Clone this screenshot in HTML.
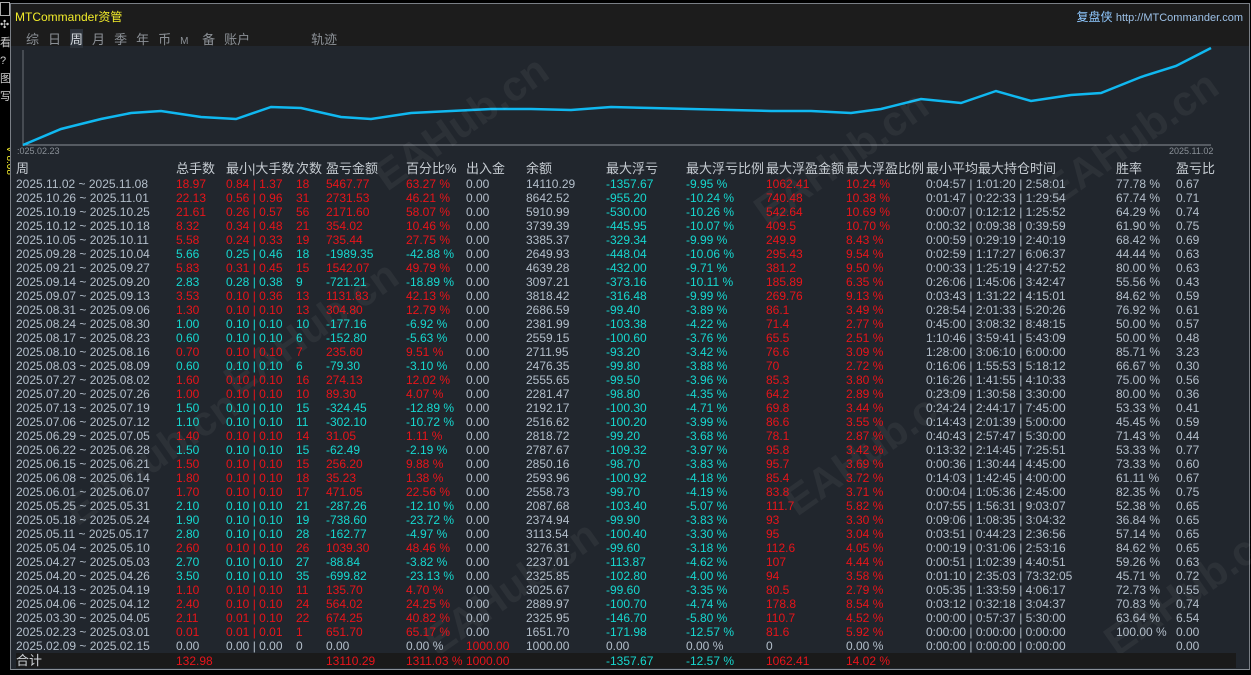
<!DOCTYPE html>
<html><head><meta charset="utf-8"><style>
body{margin:0;width:1251px;height:675px;background:#000;overflow:hidden;position:relative;font-family:"Liberation Sans","Noto Sans CJK SC",sans-serif}
.panel{position:absolute;left:10px;top:3px;width:1238px;height:665px;background:#21262d;border:1px solid #7a7f86;border-bottom:1px solid #8a9097}
.hdr{position:absolute;left:0;top:0;width:1238px;height:42px;background:#1c1c1c}
.title{position:absolute;left:4px;top:4px;color:#f2ec2a;font-size:12px}
.site{position:absolute;right:6px;top:4px;color:#8fc8ff;font-size:12px}
.site span{color:#9cc0e6;font-size:11px}
.tabs{position:absolute;left:15px;top:25px;color:#8b9096;font-size:13px;word-spacing:0}
.tabs b{font-weight:normal;display:inline-block;margin-right:9px}
.tabs .on{color:#d6dbe0;background:#2c323a}
.wm{position:absolute;color:rgba(255,255,255,0.05);font-size:42px;font-weight:bold;transform:rotate(-35deg);white-space:nowrap}
table{position:absolute;left:5px;top:156px;border-collapse:collapse;table-layout:fixed;font-size:12px;color:#b4bfcb}
td{padding:0;height:14px;line-height:14px;white-space:nowrap;overflow:visible}
tr.h td{font-size:13px;height:17px;color:#c6ccd2}
.r td.c{color:#e8141a}.g td.c{color:#16d8d0}
td.cy{color:#16d8d0}td.rd{color:#e8141a}
tr.t td{background:#1a1a1a;height:15px}
</style></head><body>
<div style="position:absolute;left:0;top:0;width:10px;height:675px;background:#000;color:#ccc;font-size:11px;line-height:18px">
<div style="margin-top:2px;border:1px solid #aaa;height:12px;width:8px"></div>
<div>✣</div><div>看</div><div>?</div><div>图</div><div>写</div>
<div style="color:#f2ec2a;writing-mode:vertical-rl;font-size:10px;margin-top:40px">V 8.08</div>
</div>
<div class="panel">
<div class="hdr"><div class="title">MTCommander资管</div><div class="site">复盘侠 <span>http://MTCommander.com</span></div>
<div class="tabs"><b>综</b><b>日</b><b class="on">周</b><b>月</b><b>季</b><b>年</b><b>币</b><b style="font-size:10px;width:13px">M</b><b>备</b><b>账户</b><b style="margin-left:52px">轨迹</b></div></div>
<svg style="position:absolute;left:0;top:42px" width="1238" height="110">
<line x1="12" y1="4" x2="12" y2="100" stroke="#6a7078"/>
<line x1="12" y1="99" x2="1200" y2="99" stroke="#8a9097"/>
<polyline fill="none" stroke="#10b8f0" stroke-width="2.5" points="12,99 50,83 90,73 120,67 150,65 190,71 225,73 260,61 290,62 330,71 360,73 400,67 440,65 480,63 520,63 560,64 600,61 640,62 680,63 720,64 760,65 800,65 840,67 870,63 910,53 950,57 985,45 1020,55 1060,49 1090,47 1130,31 1165,20 1200,2"/>
<text x="6" y="108" fill="#8a9097" font-size="9" font-family="Liberation Sans">:025.02.23</text>
<text x="1158" y="108" fill="#8a9097" font-size="9" font-family="Liberation Sans">2025.11.02</text>
</svg>
<div class="wm" style="left:350px;top:95px">EAHub.cn</div>
<div class="wm" style="left:730px;top:130px">EAHub.cn</div>
<div class="wm" style="left:1020px;top:110px">EAHub.cn</div>
<div class="wm" style="left:40px;top:430px">EAHub.cn</div>
<div class="wm" style="left:400px;top:560px">EAHub.cn</div>
<div class="wm" style="left:760px;top:420px">EAHub.cn</div>
<div class="wm" style="left:1080px;top:560px">EAHub.cn</div>
<div class="wm" style="left:200px;top:300px">EAHub.cn</div>
<table>
<colgroup><col style="width:160px"><col style="width:50px"><col style="width:70px"><col style="width:30px"><col style="width:80px"><col style="width:60px"><col style="width:60px"><col style="width:80px"><col style="width:80px"><col style="width:80px"><col style="width:80px"><col style="width:80px"><col style="width:190px"><col style="width:60px"><col style="width:60px"></colgroup>
<tr class="h"><td>周</td><td>总手数</td><td>最小|大手数</td><td>次数</td><td>盈亏金额</td><td>百分比%</td><td>出入金</td><td>余额</td><td>最大浮亏</td><td>最大浮亏比例</td><td>最大浮盈金额</td><td>最大浮盈比例</td><td>最小平均最大持仓时间</td><td>胜率</td><td>盈亏比</td></tr>
<tr class="r"><td>2025.11.02 ~ 2025.11.08</td><td class="c">18.97</td><td class="c">0.84 | 1.37</td><td class="c">18</td><td class="c">5467.77</td><td class="c">63.27 %</td><td>0.00</td><td>14110.29</td><td class="cy">-1357.67</td><td class="cy">-9.95 %</td><td class="rd">1062.41</td><td class="rd">10.24 %</td><td>0:04:57 | 1:01:20 | 2:58:01</td><td>77.78 %</td><td>0.67</td></tr>
<tr class="r"><td>2025.10.26 ~ 2025.11.01</td><td class="c">22.13</td><td class="c">0.56 | 0.96</td><td class="c">31</td><td class="c">2731.53</td><td class="c">46.21 %</td><td>0.00</td><td>8642.52</td><td class="cy">-955.20</td><td class="cy">-10.24 %</td><td class="rd">740.48</td><td class="rd">10.38 %</td><td>0:01:47 | 0:22:33 | 1:29:54</td><td>67.74 %</td><td>0.71</td></tr>
<tr class="r"><td>2025.10.19 ~ 2025.10.25</td><td class="c">21.61</td><td class="c">0.26 | 0.57</td><td class="c">56</td><td class="c">2171.60</td><td class="c">58.07 %</td><td>0.00</td><td>5910.99</td><td class="cy">-530.00</td><td class="cy">-10.26 %</td><td class="rd">542.64</td><td class="rd">10.69 %</td><td>0:00:07 | 0:12:12 | 1:25:52</td><td>64.29 %</td><td>0.74</td></tr>
<tr class="r"><td>2025.10.12 ~ 2025.10.18</td><td class="c">8.32</td><td class="c">0.34 | 0.48</td><td class="c">21</td><td class="c">354.02</td><td class="c">10.46 %</td><td>0.00</td><td>3739.39</td><td class="cy">-445.95</td><td class="cy">-10.07 %</td><td class="rd">409.5</td><td class="rd">10.70 %</td><td>0:00:32 | 0:09:38 | 0:39:59</td><td>61.90 %</td><td>0.75</td></tr>
<tr class="r"><td>2025.10.05 ~ 2025.10.11</td><td class="c">5.58</td><td class="c">0.24 | 0.33</td><td class="c">19</td><td class="c">735.44</td><td class="c">27.75 %</td><td>0.00</td><td>3385.37</td><td class="cy">-329.34</td><td class="cy">-9.99 %</td><td class="rd">249.9</td><td class="rd">8.43 %</td><td>0:00:59 | 0:29:19 | 2:40:19</td><td>68.42 %</td><td>0.69</td></tr>
<tr class="g"><td>2025.09.28 ~ 2025.10.04</td><td class="c">5.66</td><td class="c">0.25 | 0.46</td><td class="c">18</td><td class="c">-1989.35</td><td class="c">-42.88 %</td><td>0.00</td><td>2649.93</td><td class="cy">-448.04</td><td class="cy">-10.06 %</td><td class="rd">295.43</td><td class="rd">9.54 %</td><td>0:02:59 | 1:17:27 | 6:06:37</td><td>44.44 %</td><td>0.63</td></tr>
<tr class="r"><td>2025.09.21 ~ 2025.09.27</td><td class="c">5.83</td><td class="c">0.31 | 0.45</td><td class="c">15</td><td class="c">1542.07</td><td class="c">49.79 %</td><td>0.00</td><td>4639.28</td><td class="cy">-432.00</td><td class="cy">-9.71 %</td><td class="rd">381.2</td><td class="rd">9.50 %</td><td>0:00:33 | 1:25:19 | 4:27:52</td><td>80.00 %</td><td>0.63</td></tr>
<tr class="g"><td>2025.09.14 ~ 2025.09.20</td><td class="c">2.83</td><td class="c">0.28 | 0.38</td><td class="c">9</td><td class="c">-721.21</td><td class="c">-18.89 %</td><td>0.00</td><td>3097.21</td><td class="cy">-373.16</td><td class="cy">-10.11 %</td><td class="rd">185.89</td><td class="rd">6.35 %</td><td>0:26:06 | 1:45:06 | 3:42:47</td><td>55.56 %</td><td>0.43</td></tr>
<tr class="r"><td>2025.09.07 ~ 2025.09.13</td><td class="c">3.53</td><td class="c">0.10 | 0.36</td><td class="c">13</td><td class="c">1131.83</td><td class="c">42.13 %</td><td>0.00</td><td>3818.42</td><td class="cy">-316.48</td><td class="cy">-9.99 %</td><td class="rd">269.76</td><td class="rd">9.13 %</td><td>0:03:43 | 1:31:22 | 4:15:01</td><td>84.62 %</td><td>0.59</td></tr>
<tr class="r"><td>2025.08.31 ~ 2025.09.06</td><td class="c">1.30</td><td class="c">0.10 | 0.10</td><td class="c">13</td><td class="c">304.80</td><td class="c">12.79 %</td><td>0.00</td><td>2686.59</td><td class="cy">-99.40</td><td class="cy">-3.89 %</td><td class="rd">86.1</td><td class="rd">3.49 %</td><td>0:28:54 | 2:01:33 | 5:20:26</td><td>76.92 %</td><td>0.61</td></tr>
<tr class="g"><td>2025.08.24 ~ 2025.08.30</td><td class="c">1.00</td><td class="c">0.10 | 0.10</td><td class="c">10</td><td class="c">-177.16</td><td class="c">-6.92 %</td><td>0.00</td><td>2381.99</td><td class="cy">-103.38</td><td class="cy">-4.22 %</td><td class="rd">71.4</td><td class="rd">2.77 %</td><td>0:45:00 | 3:08:32 | 8:48:15</td><td>50.00 %</td><td>0.57</td></tr>
<tr class="g"><td>2025.08.17 ~ 2025.08.23</td><td class="c">0.60</td><td class="c">0.10 | 0.10</td><td class="c">6</td><td class="c">-152.80</td><td class="c">-5.63 %</td><td>0.00</td><td>2559.15</td><td class="cy">-100.60</td><td class="cy">-3.76 %</td><td class="rd">65.5</td><td class="rd">2.51 %</td><td>1:10:46 | 3:59:41 | 5:43:09</td><td>50.00 %</td><td>0.48</td></tr>
<tr class="r"><td>2025.08.10 ~ 2025.08.16</td><td class="c">0.70</td><td class="c">0.10 | 0.10</td><td class="c">7</td><td class="c">235.60</td><td class="c">9.51 %</td><td>0.00</td><td>2711.95</td><td class="cy">-93.20</td><td class="cy">-3.42 %</td><td class="rd">76.6</td><td class="rd">3.09 %</td><td>1:28:00 | 3:06:10 | 6:00:00</td><td>85.71 %</td><td>3.23</td></tr>
<tr class="g"><td>2025.08.03 ~ 2025.08.09</td><td class="c">0.60</td><td class="c">0.10 | 0.10</td><td class="c">6</td><td class="c">-79.30</td><td class="c">-3.10 %</td><td>0.00</td><td>2476.35</td><td class="cy">-99.80</td><td class="cy">-3.88 %</td><td class="rd">70</td><td class="rd">2.72 %</td><td>0:16:06 | 1:55:53 | 5:18:12</td><td>66.67 %</td><td>0.30</td></tr>
<tr class="r"><td>2025.07.27 ~ 2025.08.02</td><td class="c">1.60</td><td class="c">0.10 | 0.10</td><td class="c">16</td><td class="c">274.13</td><td class="c">12.02 %</td><td>0.00</td><td>2555.65</td><td class="cy">-99.50</td><td class="cy">-3.96 %</td><td class="rd">85.3</td><td class="rd">3.80 %</td><td>0:16:26 | 1:41:55 | 4:10:33</td><td>75.00 %</td><td>0.56</td></tr>
<tr class="r"><td>2025.07.20 ~ 2025.07.26</td><td class="c">1.00</td><td class="c">0.10 | 0.10</td><td class="c">10</td><td class="c">89.30</td><td class="c">4.07 %</td><td>0.00</td><td>2281.47</td><td class="cy">-98.80</td><td class="cy">-4.35 %</td><td class="rd">64.2</td><td class="rd">2.89 %</td><td>0:23:09 | 1:30:58 | 3:30:00</td><td>80.00 %</td><td>0.36</td></tr>
<tr class="g"><td>2025.07.13 ~ 2025.07.19</td><td class="c">1.50</td><td class="c">0.10 | 0.10</td><td class="c">15</td><td class="c">-324.45</td><td class="c">-12.89 %</td><td>0.00</td><td>2192.17</td><td class="cy">-100.30</td><td class="cy">-4.71 %</td><td class="rd">69.8</td><td class="rd">3.44 %</td><td>0:24:24 | 2:44:17 | 7:45:00</td><td>53.33 %</td><td>0.41</td></tr>
<tr class="g"><td>2025.07.06 ~ 2025.07.12</td><td class="c">1.10</td><td class="c">0.10 | 0.10</td><td class="c">11</td><td class="c">-302.10</td><td class="c">-10.72 %</td><td>0.00</td><td>2516.62</td><td class="cy">-100.20</td><td class="cy">-3.99 %</td><td class="rd">86.6</td><td class="rd">3.55 %</td><td>0:14:43 | 2:01:39 | 5:00:00</td><td>45.45 %</td><td>0.59</td></tr>
<tr class="r"><td>2025.06.29 ~ 2025.07.05</td><td class="c">1.40</td><td class="c">0.10 | 0.10</td><td class="c">14</td><td class="c">31.05</td><td class="c">1.11 %</td><td>0.00</td><td>2818.72</td><td class="cy">-99.20</td><td class="cy">-3.68 %</td><td class="rd">78.1</td><td class="rd">2.87 %</td><td>0:40:43 | 2:57:47 | 5:30:00</td><td>71.43 %</td><td>0.44</td></tr>
<tr class="g"><td>2025.06.22 ~ 2025.06.28</td><td class="c">1.50</td><td class="c">0.10 | 0.10</td><td class="c">15</td><td class="c">-62.49</td><td class="c">-2.19 %</td><td>0.00</td><td>2787.67</td><td class="cy">-109.32</td><td class="cy">-3.97 %</td><td class="rd">95.8</td><td class="rd">3.42 %</td><td>0:13:32 | 2:14:45 | 7:25:51</td><td>53.33 %</td><td>0.77</td></tr>
<tr class="r"><td>2025.06.15 ~ 2025.06.21</td><td class="c">1.50</td><td class="c">0.10 | 0.10</td><td class="c">15</td><td class="c">256.20</td><td class="c">9.88 %</td><td>0.00</td><td>2850.16</td><td class="cy">-98.70</td><td class="cy">-3.83 %</td><td class="rd">95.7</td><td class="rd">3.69 %</td><td>0:00:36 | 1:30:44 | 4:45:00</td><td>73.33 %</td><td>0.60</td></tr>
<tr class="r"><td>2025.06.08 ~ 2025.06.14</td><td class="c">1.80</td><td class="c">0.10 | 0.10</td><td class="c">18</td><td class="c">35.23</td><td class="c">1.38 %</td><td>0.00</td><td>2593.96</td><td class="cy">-100.92</td><td class="cy">-4.18 %</td><td class="rd">85.4</td><td class="rd">3.72 %</td><td>0:14:03 | 1:42:45 | 4:00:00</td><td>61.11 %</td><td>0.67</td></tr>
<tr class="r"><td>2025.06.01 ~ 2025.06.07</td><td class="c">1.70</td><td class="c">0.10 | 0.10</td><td class="c">17</td><td class="c">471.05</td><td class="c">22.56 %</td><td>0.00</td><td>2558.73</td><td class="cy">-99.70</td><td class="cy">-4.19 %</td><td class="rd">83.8</td><td class="rd">3.71 %</td><td>0:00:04 | 1:05:36 | 2:45:00</td><td>82.35 %</td><td>0.75</td></tr>
<tr class="g"><td>2025.05.25 ~ 2025.05.31</td><td class="c">2.10</td><td class="c">0.10 | 0.10</td><td class="c">21</td><td class="c">-287.26</td><td class="c">-12.10 %</td><td>0.00</td><td>2087.68</td><td class="cy">-103.40</td><td class="cy">-5.07 %</td><td class="rd">111.7</td><td class="rd">5.82 %</td><td>0:07:55 | 1:56:31 | 9:03:07</td><td>52.38 %</td><td>0.65</td></tr>
<tr class="g"><td>2025.05.18 ~ 2025.05.24</td><td class="c">1.90</td><td class="c">0.10 | 0.10</td><td class="c">19</td><td class="c">-738.60</td><td class="c">-23.72 %</td><td>0.00</td><td>2374.94</td><td class="cy">-99.90</td><td class="cy">-3.83 %</td><td class="rd">93</td><td class="rd">3.30 %</td><td>0:09:06 | 1:08:35 | 3:04:32</td><td>36.84 %</td><td>0.65</td></tr>
<tr class="g"><td>2025.05.11 ~ 2025.05.17</td><td class="c">2.80</td><td class="c">0.10 | 0.10</td><td class="c">28</td><td class="c">-162.77</td><td class="c">-4.97 %</td><td>0.00</td><td>3113.54</td><td class="cy">-100.40</td><td class="cy">-3.30 %</td><td class="rd">95</td><td class="rd">3.04 %</td><td>0:03:51 | 0:44:23 | 2:36:56</td><td>57.14 %</td><td>0.65</td></tr>
<tr class="r"><td>2025.05.04 ~ 2025.05.10</td><td class="c">2.60</td><td class="c">0.10 | 0.10</td><td class="c">26</td><td class="c">1039.30</td><td class="c">48.46 %</td><td>0.00</td><td>3276.31</td><td class="cy">-99.60</td><td class="cy">-3.18 %</td><td class="rd">112.6</td><td class="rd">4.05 %</td><td>0:00:19 | 0:31:06 | 2:53:16</td><td>84.62 %</td><td>0.65</td></tr>
<tr class="g"><td>2025.04.27 ~ 2025.05.03</td><td class="c">2.70</td><td class="c">0.10 | 0.10</td><td class="c">27</td><td class="c">-88.84</td><td class="c">-3.82 %</td><td>0.00</td><td>2237.01</td><td class="cy">-113.87</td><td class="cy">-4.62 %</td><td class="rd">107</td><td class="rd">4.44 %</td><td>0:00:51 | 1:02:39 | 4:40:51</td><td>59.26 %</td><td>0.63</td></tr>
<tr class="g"><td>2025.04.20 ~ 2025.04.26</td><td class="c">3.50</td><td class="c">0.10 | 0.10</td><td class="c">35</td><td class="c">-699.82</td><td class="c">-23.13 %</td><td>0.00</td><td>2325.85</td><td class="cy">-102.80</td><td class="cy">-4.00 %</td><td class="rd">94</td><td class="rd">3.58 %</td><td>0:01:10 | 2:35:03 | 73:32:05</td><td>45.71 %</td><td>0.72</td></tr>
<tr class="r"><td>2025.04.13 ~ 2025.04.19</td><td class="c">1.10</td><td class="c">0.10 | 0.10</td><td class="c">11</td><td class="c">135.70</td><td class="c">4.70 %</td><td>0.00</td><td>3025.67</td><td class="cy">-99.60</td><td class="cy">-3.35 %</td><td class="rd">80.5</td><td class="rd">2.79 %</td><td>0:05:35 | 1:33:59 | 4:06:17</td><td>72.73 %</td><td>0.55</td></tr>
<tr class="r"><td>2025.04.06 ~ 2025.04.12</td><td class="c">2.40</td><td class="c">0.10 | 0.10</td><td class="c">24</td><td class="c">564.02</td><td class="c">24.25 %</td><td>0.00</td><td>2889.97</td><td class="cy">-100.70</td><td class="cy">-4.74 %</td><td class="rd">178.8</td><td class="rd">8.54 %</td><td>0:03:12 | 0:32:18 | 3:04:37</td><td>70.83 %</td><td>0.74</td></tr>
<tr class="r"><td>2025.03.30 ~ 2025.04.05</td><td class="c">2.11</td><td class="c">0.01 | 0.10</td><td class="c">22</td><td class="c">674.25</td><td class="c">40.82 %</td><td>0.00</td><td>2325.95</td><td class="cy">-146.70</td><td class="cy">-5.80 %</td><td class="rd">110.7</td><td class="rd">4.52 %</td><td>0:00:00 | 0:57:37 | 5:30:00</td><td>63.64 %</td><td>6.54</td></tr>
<tr class="r"><td>2025.02.23 ~ 2025.03.01</td><td class="c">0.01</td><td class="c">0.01 | 0.01</td><td class="c">1</td><td class="c">651.70</td><td class="c">65.17 %</td><td>0.00</td><td>1651.70</td><td class="cy">-171.98</td><td class="cy">-12.57 %</td><td class="rd">81.6</td><td class="rd">5.92 %</td><td>0:00:00 | 0:00:00 | 0:00:00</td><td>100.00 %</td><td>0.00</td></tr>
<tr><td>2025.02.09 ~ 2025.02.15</td><td>0.00</td><td>0.00 | 0.00</td><td>0</td><td>0.00</td><td>0.00 %</td><td class="rd">1000.00</td><td>1000.00</td><td>0.00</td><td>0.00 %</td><td>0</td><td>0.00 %</td><td>0:00:00 | 0:00:00 | 0:00:00</td><td></td><td>0.00</td></tr>
<tr class="t"><td style="font-size:13px;color:#d0d4d8">合计</td><td class="rd">132.98</td><td></td><td></td><td class="rd">13110.29</td><td class="rd">1311.03 %</td><td class="rd">1000.00</td><td></td><td class="cy">-1357.67</td><td class="cy">-12.57 %</td><td class="rd">1062.41</td><td class="rd">14.02 %</td><td></td><td></td><td></td></tr>
</table>
</div>
</body></html>
